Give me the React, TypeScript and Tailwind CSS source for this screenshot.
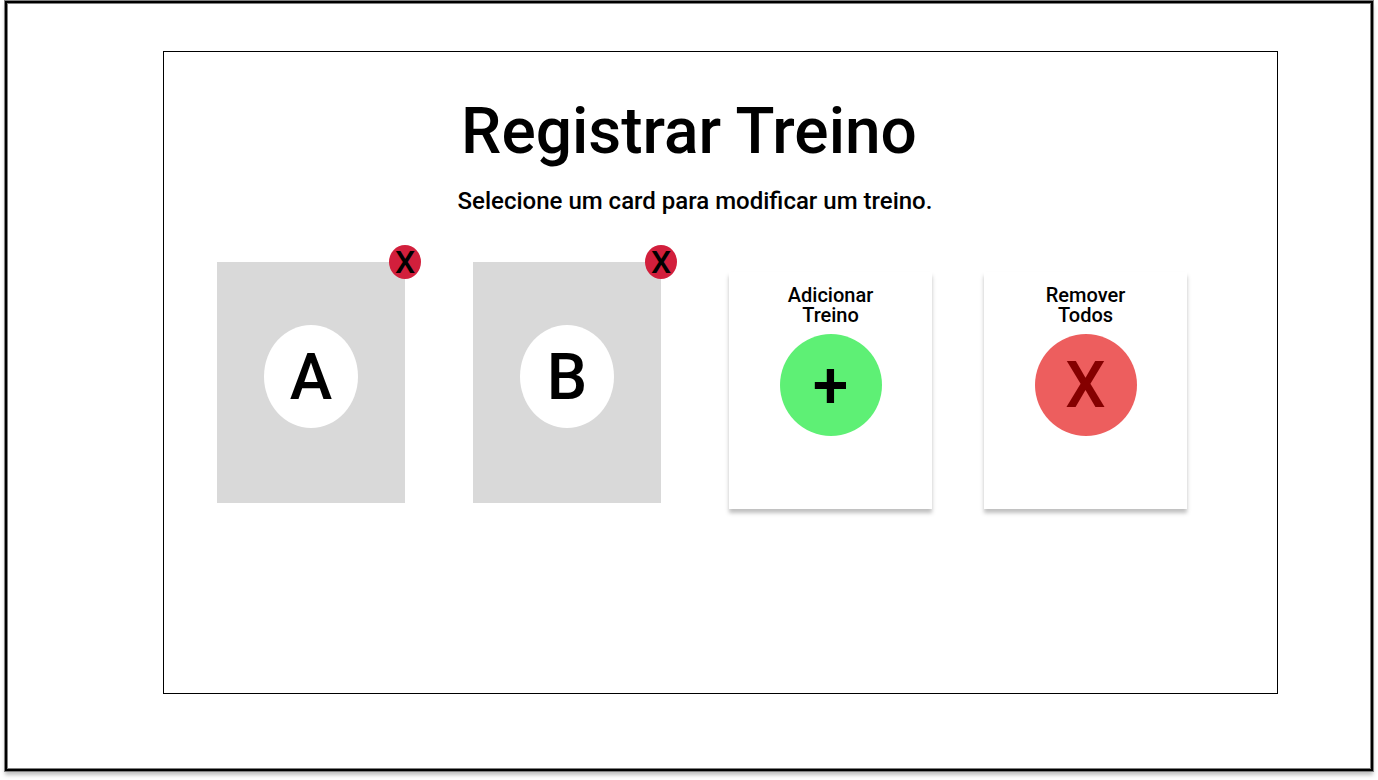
import React, { useState } from "react";

type WorkoutCardProps = { letter: string; onRemove: () => void };

function WorkoutCard({ letter, onRemove }: WorkoutCardProps) {
  return (
    <li className="relative">
      <button
        type="button"
        aria-label={`Modificar treino ${letter}`}
        className="flex h-[241px] w-[188px] justify-center bg-[#d9d9d9] pt-[63px]"
      >
        <span className="flex h-[103px] w-[94px] items-center justify-center rounded-[50%] bg-white pt-0.5 text-[64px] leading-[64px]">
          {letter}
        </span>
      </button>
      <button
        type="button"
        aria-label={`Remover treino ${letter}`}
        onClick={onRemove}
        className="absolute -right-4 -top-[17px] flex h-[34px] w-8 items-center justify-center rounded-[50%] bg-[#d21f3c] text-[32px] leading-8"
      >
        X
      </button>
    </li>
  );
}

type ActionCardProps = {
  title: string;
  symbol: string;
  symbolClass: string;
  onClick: () => void;
};

function ActionCard({ title, symbol, symbolClass, onClick }: ActionCardProps) {
  return (
    <button
      type="button"
      onClick={onClick}
      className="mt-[10px] flex h-[237px] w-[203px] flex-col items-center gap-[9px] bg-white pt-[13px] shadow-[0_4px_4px_rgba(0,0,0,0.25)]"
    >
      <span className="w-24 text-center text-xl leading-5">{title}</span>
      <span
        className={`flex size-[102px] items-center justify-center rounded-full pt-0.5 text-[64px] leading-[64px] ${symbolClass}`}
      >
        {symbol}
      </span>
    </button>
  );
}

export default function App() {
  const [workouts, setWorkouts] = useState<string[]>(["A", "B"]);

  const addWorkout = () =>
    setWorkouts((list) => {
      const next = "ABCDEFGHIJ".split("").find((l) => !list.includes(l));
      return next ? [...list, next] : list;
    });

  return (
    <div className="flex min-h-screen flex-col bg-white px-[5px] pb-[9px] pt-px font-['Roboto',sans-serif] font-medium text-black">
      <div className="flex flex-1 flex-col border-2 border-black pb-[75px] pl-[156px] pr-[93px] pt-12 shadow-[0_0_0_1px_#808080,inset_0_0_0_1px_#808080,0_4px_4px_rgba(0,0,0,0.25)]">
        <main className="flex-1 border border-black pl-[53px] pt-12">
          <header className="flex flex-col items-center gap-[25px] pr-[116px] text-center">
            <h1 className="text-[64px] leading-[64px]">Registrar Treino</h1>
            <p className="pl-3 text-2xl leading-6">
              Selecione um card para modificar um treino.
            </p>
          </header>
          <div className="mt-[49px] flex flex-wrap items-start gap-x-[68px] gap-y-8">
            <ul className="contents">
              {workouts.map((letter) => (
                <WorkoutCard
                  key={letter}
                  letter={letter}
                  onRemove={() =>
                    setWorkouts((list) => list.filter((l) => l !== letter))
                  }
                />
              ))}
            </ul>
            <div className="flex gap-[52px]">
              <ActionCard
                title="Adicionar Treino"
                symbol="+"
                symbolClass="bg-[#5ef075]"
                onClick={addWorkout}
              />
              <ActionCard
                title="Remover Todos"
                symbol="X"
                symbolClass="bg-[#ed5e5e] text-[#850000]"
                onClick={() => setWorkouts([])}
              />
            </div>
          </div>
        </main>
      </div>
    </div>
  );
}
